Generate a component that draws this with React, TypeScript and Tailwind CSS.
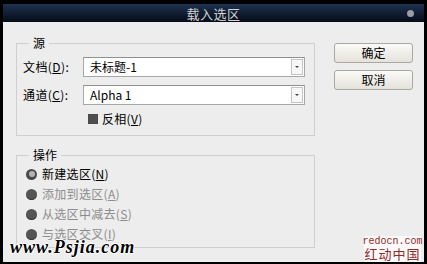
import React from 'react';

const font = { fontFamily: '"Noto Sans CJK SC", "Noto Sans", sans-serif' };

const Select = ({ value }: { value: string }) => (
  <div className="flex h-[20px] w-[222px] items-center border border-[#a7a7a7] border-t-[#8f8f8f] bg-white pl-[6px] pr-[1px]">
    <span className="flex-1 text-[12px] leading-none text-black">{value}</span>
    <div className="flex h-[16px] w-[12px] items-start justify-center border border-[#c4c4c4] bg-[#f7f7f7]">
      <span className="mt-[6px] block h-0 w-0 border-x-[2px] border-t-[2px] border-x-transparent border-t-[#444]" />
    </div>
  </div>
);

const Radio = ({ label, hot, checked }: { label: string; hot: string; checked?: boolean }) => (
  <div className="flex h-[20px] items-center gap-[5px]">
    {checked ? (
      <span className="flex h-[11px] w-[11px] items-center justify-center rounded-full bg-[#4a4a4a]">
        <span className="h-[6px] w-[6px] rounded-full bg-[#b4b4b4]" />
      </span>
    ) : (
      <span className="h-[11px] w-[11px] rounded-full bg-[#555] shadow-[inset_0_-1px_1px_rgba(0,0,0,0.4)]" />
    )}
    <span className={`text-[12px] leading-none tracking-[0.3px] ${checked ? 'text-black' : 'text-[#8c8c8c]'}`}>
      {label}(<span className="underline">{hot}</span>)
    </span>
  </div>
);

const Button = ({ label }: { label: string }) => (
  <button className="flex h-[20px] w-[79px] items-center justify-center rounded-[3px] border border-[#a9a8a1] bg-gradient-to-b from-[#fafaf7] to-[#e4e2da] text-[12px] leading-none text-black">
    {label}
  </button>
);

export default function App() {
  return (
    <div className="relative flex h-[264px] w-[427px] flex-col bg-black pb-[2px] pl-[3px] pr-[3px] pt-[4px]" style={font}>
      <div className="relative flex h-[18px] items-center justify-center bg-gradient-to-b from-[#1e3250] to-[#060c18]">
        <span className="text-[13px] leading-none tracking-[0.5px] text-[#d4d4d4]">载入选区</span>
        <span className="absolute right-[10px] top-[6px] h-[7px] w-[7px] rounded-full bg-[#9a9ea6]" />
      </div>
      <div className="flex flex-1 gap-[19px] bg-[#ededed] pl-[13px] pt-[21px]">
        <div className="flex flex-col gap-[19px]">
          <div className="relative h-[93px] w-[299px] border border-[#cfcfcf]">
            <span className="absolute left-[12px] top-[-9px] bg-[#ededed] px-[4px] text-[12px] leading-[16px] text-black">源</span>
            <div className="flex flex-col gap-[8px] pl-[6px] pt-[13px]">
              <div className="flex items-center">
                <span className="w-[60px] text-[12px] leading-none tracking-[0.4px] text-black">
                  文档(<span className="underline">D</span>):
                </span>
                <Select value="未标题-1" />
              </div>
              <div className="flex items-center">
                <span className="w-[60px] text-[12px] leading-none tracking-[0.4px] text-black">
                  通道(<span className="underline">C</span>):
                </span>
                <Select value="Alpha 1" />
              </div>
              <div className="flex items-center gap-[4px] pl-[65px]">
                <span className="h-[10px] w-[10px] bg-[#4f4f4f] shadow-[inset_0_0_1px_rgba(0,0,0,0.6)]" />
                <span className="text-[12px] leading-none tracking-[0.3px] text-black">
                  反相(<span className="underline">V</span>)
                </span>
              </div>
            </div>
          </div>
          <div className="relative h-[93px] w-[299px] border border-[#cfcfcf]">
            <span className="absolute left-[12px] top-[-9px] bg-[#ededed] px-[4px] text-[12px] leading-[16px] text-black">操作</span>
            <div className="flex flex-col pl-[9px] pt-[8px]">
              <Radio label="新建选区" hot="N" checked />
              <Radio label="添加到选区" hot="A" />
              <Radio label="从选区中减去" hot="S" />
              <Radio label="与选区交叉" hot="I" />
            </div>
          </div>
        </div>
        <div className="flex flex-col gap-[7px]">
          <Button label="确定" />
          <Button label="取消" />
        </div>
      </div>

      <span
        className="absolute left-[10px] top-[238px] text-[18px] font-bold italic leading-none tracking-[1px] text-black"
        style={{ fontFamily: '"Liberation Serif", serif', textShadow: '1px 0 #fff, -1px 0 #fff, 0 1px #fff, 0 -1px #fff' }}
      >
        www.Psjia.com
      </span>
      <div className="absolute left-[364px] top-[236px] flex h-[26px] w-[57px] flex-col items-center bg-[#fbf9f9] leading-none text-[#8f2a2a]">
        <span className="text-[10px] leading-[11px]" style={{ fontFamily: '"Liberation Mono", monospace' }}>redocn.com</span>
        <span className="text-[13px] leading-[14px] tracking-[1px]">红动中国</span>
      </div>
    </div>
  );
}
